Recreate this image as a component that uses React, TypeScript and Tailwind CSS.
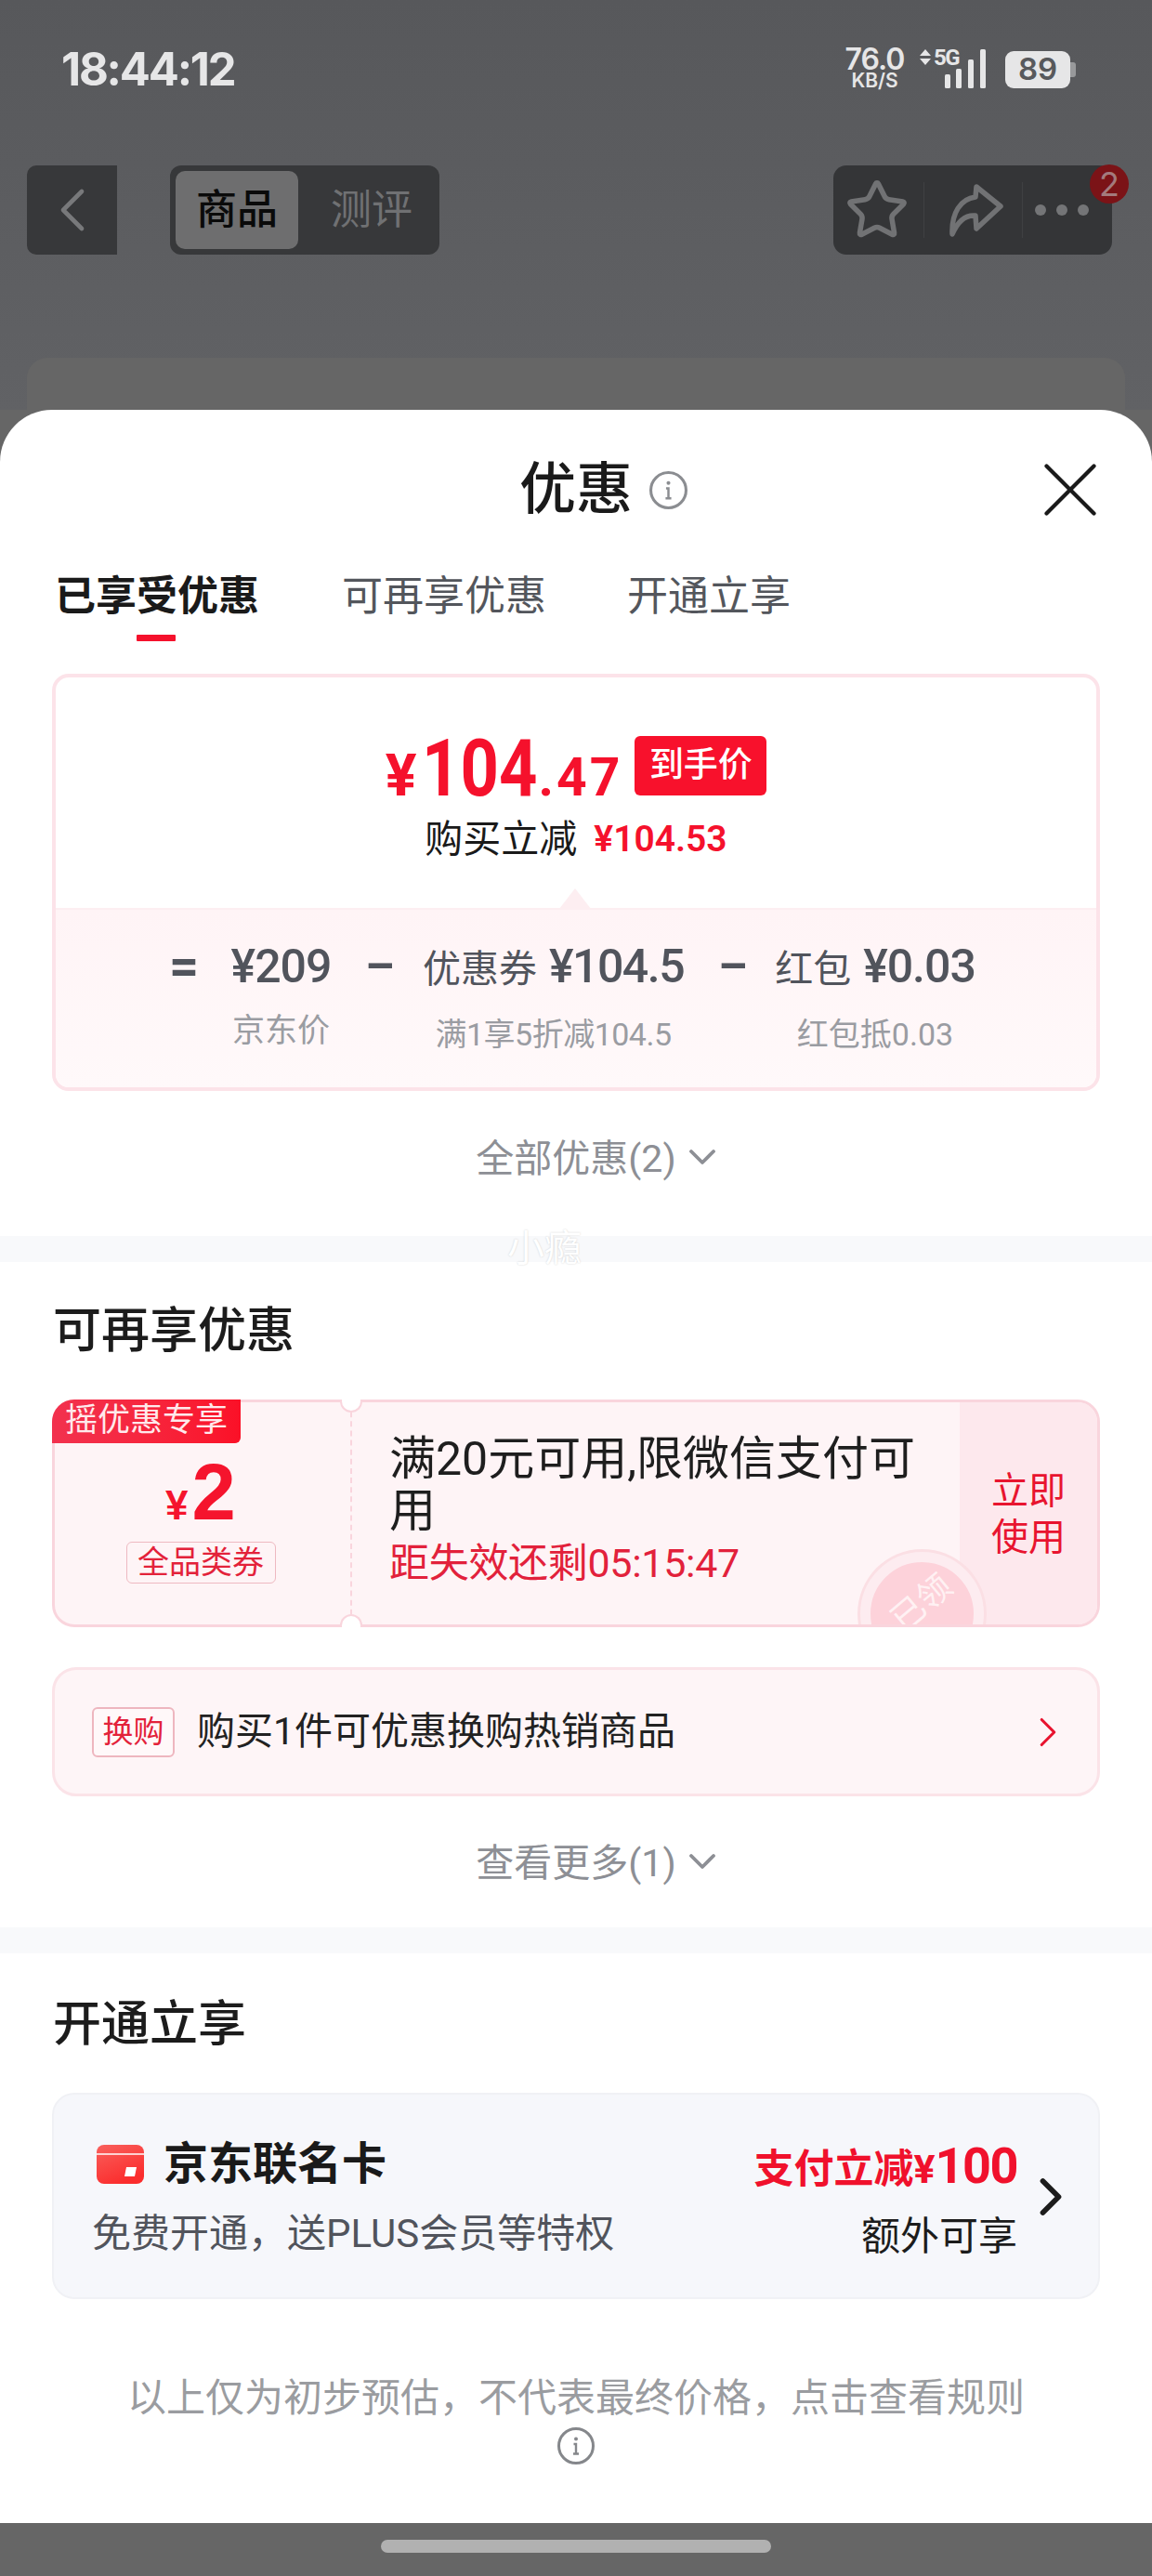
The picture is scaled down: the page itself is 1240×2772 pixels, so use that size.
import { ChevronDown, ChevronLeft, ChevronRight, Star, X } from "lucide-react";

const sans = "font-['Roboto','Noto_Sans_CJK_SC',sans-serif]";

function InfoIcon({ size, color }: { size: number; color: string }) {
  return (
    <svg width={size} height={size} viewBox="0 0 40 40" fill="none">
      <circle cx="20" cy="20" r="18.500" stroke={color} strokeWidth="3" />
      <circle cx="20" cy="12.5" r="2" fill={color} />
      <path d="M17.500 18h2.500v10.500M17 28.500h6" stroke={color} strokeWidth="2.400" />
    </svg>
  );
}

function StatusBar() {
  return (
    <div className="flex h-[150px] shrink-0 items-start justify-between pl-[66px] pr-[82px] pt-[51px]">
      <span className="font-['Inter',sans-serif] text-[49px] leading-[48px] font-bold tracking-[-2.200px] text-[#e6e6e7]">
        18:44:12
      </span>
      <div className="flex items-start">
        <div className="flex w-[67px] flex-col items-center text-[#e6e6e7]">
          <span className="font-['Inter',sans-serif] text-[32px] leading-[26px] font-semibold tracking-[-1px]">76.0</span>
          <span className="mt-[1px] font-['Inter',sans-serif] text-[21px] leading-[18px] font-semibold">KB/S</span>
        </div>
        <div className="relative mt-[2px] ml-[15px] h-[42px] w-[71px]">
          <svg width="71" height="42" viewBox="0 0 71 42" fill="#e6e6e7">
            <path d="M0 7 6 0 12 7zM0 10h12l-6 7z" />
            <rect x="27" y="27" width="6" height="15" rx="1.500" />
            <rect x="39" y="21" width="6" height="21" rx="1.500" />
            <rect x="52" y="11" width="6" height="31" rx="1.500" />
            <rect x="65" y="0" width="6" height="42" rx="1.500" />
          </svg>
          <span className="absolute top-[-3px] left-[15px] font-['Roboto',sans-serif] text-[24px] leading-[24px] font-bold tracking-[-1.500px] text-[#e6e6e7]">
            5G
          </span>
        </div>
        <div className="mt-[4px] ml-[21px] flex items-center">
          <div className="flex h-[40px] w-[70px] items-center justify-center rounded-[9px] bg-[#e6e6e7] font-['Inter',sans-serif] text-[33px] font-semibold text-[#58595c]">
            89
          </div>
          <div className="h-[16px] w-[6px] rounded-r-[3px] bg-[#98999b]" />
        </div>
      </div>
    </div>
  );
}

function TopNav() {
  return (
    <div className="mt-[28px] flex h-[96px] shrink-0 items-stretch justify-between pl-[29px] pr-[43px]">
      <div className="flex">
        <div className="flex w-[97px] items-center justify-center rounded-l-[10px] bg-[#37383a]">
          <ChevronLeft size={80} strokeWidth={1.4} color="#78797b" />
        </div>
        <div className="ml-[57px] flex w-[290px] rounded-[12px] bg-[#37383a] p-[6px]">
          <div className="flex h-[84px] w-[132px] items-center justify-center rounded-[10px] bg-[#6e6e6f] text-[44px] font-medium text-[#0a0a0a]">
            商品
          </div>
          <div className="flex flex-1 items-center justify-center pl-[12px] text-[44px] text-[#707173]">测评</div>
        </div>
      </div>
      <div className="relative flex w-[300px] items-center rounded-[14px] bg-[#343537] pl-[12px]">
        <Star size={70} strokeWidth={1.9} color="#717274" />
        <div className="ml-[15px] h-[60px] w-[1px] bg-[#3f4042]" />
        <svg className="ml-[25px]" width="60" height="58" viewBox="0 0 60 58" fill="none" stroke="#717274" strokeWidth="5.500" strokeLinejoin="round" strokeLinecap="round">
          <path d="M31 4 57 25 31 49 30 35C20 34 11 41 5 55 4 32 14 17 30 15Z" />
        </svg>
        <div className="ml-[20px] h-[60px] w-[1px] bg-[#3f4042]" />
        <div className="ml-[13px] flex gap-[11px]">
          <span className="size-[12px] rounded-full bg-[#747577]" />
          <span className="size-[12px] rounded-full bg-[#747577]" />
          <span className="size-[12px] rounded-full bg-[#747577]" />
        </div>
        <span className="absolute top-[-1px] right-[-18px] flex size-[42px] items-center justify-center rounded-full bg-[#7b1317] font-['Inter',sans-serif] text-[36px] text-[#a37b7d]">
          2
        </span>
      </div>
    </div>
  );
}

function PriceCard() {
  return (
    <div className="mx-[56px] mt-[40px] h-[449px] rounded-[18px] border-[4px] border-[#fce3e9] bg-white">
      <div className="relative h-[248px]">
        <div className="flex justify-center pt-[62px]">
          <div className="flex items-baseline font-['Roboto',sans-serif] leading-[72px] font-bold text-[#f5112c]">
            <span className="text-[63px]">¥</span>
            <span className="mr-[-23px] ml-[6px] origin-left scale-x-[0.84] text-[86px]">104</span>
            <span className="text-[57px] tracking-[3px]">.47</span>
          </div>
          <span className="mt-[1px] ml-[13px] flex h-[64px] w-[142px] items-center justify-center rounded-[6px] bg-[#f8112c] text-[37px] font-medium text-white">
            到手价
          </span>
        </div>
        <div className="flex items-center justify-center">
          <span className="text-[41px] leading-[60px] text-[#1a1a1a]">购买立减</span>
          <span className="ml-[18px] font-['Roboto',sans-serif] text-[39px] font-semibold text-[#f5112c]">¥104.53</span>
        </div>
        <div className="absolute bottom-[-1px] left-[542px] h-0 w-0 border-x-[17px] border-b-[22px] border-x-transparent border-b-[#fdeef1]" />
      </div>
      <div className="flex h-[193px] items-start rounded-b-[14px] border-t-[2px] border-[#fdeef1] bg-gradient-to-b from-[#fff4f6] to-[#fff9fa] pl-[122px] pt-[31px] text-[#51545c]">
        <span className="w-[67px] text-[56px] leading-[60px] font-bold">=</span>
        <div className="flex w-[107px] flex-col items-center">
          <span className="font-['Roboto',sans-serif] text-[50px] leading-[60px] font-medium tracking-[-1px]">¥209</span>
          <span className="mt-[18px] text-[35px] leading-[44px] whitespace-nowrap text-[#9a9ca2]">京东价</span>
        </div>
        <span className="ml-[37px] w-[64px] text-[50px] leading-[60px] font-bold">–</span>
        <div className="flex w-[277px] flex-col items-center">
          <div className="flex items-baseline whitespace-nowrap">
            <span className="text-[41px] leading-[60px]">优惠券</span>
            <span className="ml-[13px] font-['Roboto',sans-serif] text-[50px] leading-[60px] font-medium tracking-[-1.500px]">¥104.5</span>
          </div>
          <span className="mt-[18px] text-[34px] leading-[44px] tracking-[-0.500px] whitespace-nowrap text-[#9a9ca2]">满1享5折减104.5</span>
        </div>
        <span className="ml-[39px] w-[63px] text-[50px] leading-[60px] font-bold">–</span>
        <div className="flex w-[212px] flex-col items-center">
          <div className="flex items-baseline whitespace-nowrap">
            <span className="text-[41px] leading-[60px]">红包</span>
            <span className="ml-[13px] font-['Roboto',sans-serif] text-[50px] leading-[60px] font-medium tracking-[-1px]">¥0.03</span>
          </div>
          <span className="mt-[18px] text-[34px] leading-[44px] whitespace-nowrap text-[#9a9ca2]">红包抵0.03</span>
        </div>
      </div>
    </div>
  );
}

function Coupon() {
  return (
    <div className="relative mx-[56px] mt-[43px] h-[245px]">
      <div className="flex h-full overflow-hidden rounded-[24px] border-[3px] border-[#f9d5dd] bg-[#fef4f6]">
        <span className="absolute top-0 left-0 flex h-[47px] w-[203px] items-center justify-center rounded-tl-[24px] rounded-br-[6px] bg-gradient-to-r from-[#f2314e] to-[#fb1027] text-[35px] text-[#ffe9ec]">
          摇优惠专享
        </span>
        <div className="flex w-[320px] shrink-0 flex-col items-center border-r-[2px] border-dashed border-[#f9d5dd] pt-[59px] pr-[4px]">
          <div className="flex items-baseline font-['Liberation_Sans',sans-serif] leading-[76px] font-bold text-[#f5142d]">
            <span className="text-[44px]">¥</span>
            <span className="ml-[4px] text-[85px]">2</span>
          </div>
          <span className="mt-[1px] flex h-[45px] w-[161px] items-center justify-center rounded-[6px] border border-[#eeb9c1] text-[34px] text-[#e3223a]">
            全品类券
          </span>
        </div>
        <div className="relative flex-1 pl-[40px] pt-[33px]">
          <p className="w-[575px] text-[50px] leading-[56px] text-[#1e1e1e]">满20元可用,限微信支付可用</p>
          <p className="text-[43px] leading-[56px] tracking-[-0.300px] text-[#e2213b]">距失效还剩05:15:47</p>
          <div className="absolute top-[161px] left-[547px] z-10 flex size-[133px] items-center justify-center rounded-full border-[11px] border-[#fdecf0] bg-[#fdd2da] shadow-[0_0_0_3px_#fbdfe4]">
            <span className="mt-[-24px] rotate-[-40deg] text-[36px] text-[#fff1f3]">已领</span>
          </div>
        </div>
        <div className="flex w-[148px] shrink-0 items-center justify-center bg-[#fde8ed] pt-[2px] text-center text-[40px] leading-[50px] text-[#e8142f]">
          立即
          <br />
          使用
        </div>
      </div>
      <span className="absolute top-0 left-[310px] h-[14px] w-[24px] rounded-b-full border-x-[2px] border-b-[2px] border-[#f9d5dd] bg-white" />
      <span className="absolute bottom-0 left-[310px] h-[14px] w-[24px] rounded-t-full border-x-[2px] border-t-[2px] border-[#f9d5dd] bg-white" />
    </div>
  );
}

function Exchange() {
  return (
    <div className="mx-[56px] mt-[43px] flex h-[139px] items-center rounded-[26px] border-[3px] border-[#fbe3e8] bg-[#fef5f7] pl-[40px] pr-[26px]">
      <span className="flex h-[54px] w-[89px] items-center justify-center rounded-[6px] border-2 border-[#eeb6bf] bg-[#fff8f9] text-[33px] text-[#e3223a]">
        换购
      </span>
      <span className="ml-[24px] flex-1 text-[41px] text-[#222]">购买1件可优惠换购热销商品</span>
      <ChevronRight size={54} strokeWidth={1.4} color="#e8142f" />
    </div>
  );
}

function MoreLink({ label }: { label: string }) {
  return (
    <div className="flex h-[60px] items-center justify-center pl-[52px] text-[41px] text-[#8d8f95]">
      <span>{label}</span>
      <ChevronDown className="mt-[-6px] ml-[4px]" size={48} strokeWidth={1.9} />
    </div>
  );
}

export default function App() {
  return (
    <div className={`${sans} flex h-[2772px] w-[1240px] flex-col overflow-hidden bg-[#666666]`}>
      <div className="h-[441px] shrink-0 bg-gradient-to-b from-[#57585b] to-[#616265]">
        <StatusBar />
        <TopNav />
        <div className="mx-[29px] mt-[111px] h-[56px] rounded-t-[22px] bg-[#666666]" />
      </div>

      <div className="relative z-10 h-[2274px] shrink-0 overflow-hidden rounded-t-[56px] bg-white pt-[26px]">
        {/* title */}
        <div className="relative flex h-[121px] items-center justify-center pl-[59px]">
          <span className="text-[61px] font-medium text-[#1a1a1a]">优惠</span>
          <span className="ml-[18px]">
            <InfoIcon size={41} color="#8b8d91" />
          </span>
          <X className="absolute top-[9px] right-[37px]" size={102} strokeWidth={1} color="#1a1a1a" />
        </div>

        {/* tabs */}
        <div className="mt-[25px] flex h-[72px] pl-[59px] text-[44px] leading-[58px]">
          <div className="relative h-[58px] font-bold text-[#1a1a1a]">
            已享受优惠
            <span className="absolute bottom-[-19px] left-[88px] h-[7px] w-[42px] rounded-[1px] bg-[#f5112c]" />
          </div>
          <span className="ml-[89px] text-[#53565c]">可再享优惠</span>
          <span className="ml-[87px] text-[#53565c]">开通立享</span>
        </div>

        <PriceCard />
        <div className="mt-[44px]">
          <MoreLink label="全部优惠(2)" />
        </div>

        {/* divider */}
        <div className="relative mt-[52px] h-[28px] bg-[#f8f9fb]">
          <span className="absolute top-[-16px] left-[546px] text-[40px] text-white [text-shadow:0_0_2px_rgba(0,0,0,0.18)]">小瘾</span>
        </div>

        <h2 className="pl-[57px] pt-[45px] text-[52px] leading-[60px] font-medium text-[#1c1c1c]">可再享优惠</h2>
        <Coupon />
        <Exchange />
        <div className="mt-[43px]">
          <MoreLink label="查看更多(1)" />
        </div>

        <div className="mt-[38px] h-[28px] bg-[#f8f9fb]" />

        <h2 className="pl-[57px] pt-[47px] text-[52px] leading-[60px] font-medium text-[#1c1c1c]">开通立享</h2>

        {/* co-brand card */}
        <div className="mx-[56px] mt-[43px] flex h-[222px] items-start rounded-[24px] border-2 border-[#f0f1f5] bg-[#f6f7fb] pl-[41px] pr-[17px] pt-[45px]">
          <div className="flex-1">
            <div className="flex items-center pl-[5px]">
              <svg width="51" height="42" viewBox="0 0 51 42">
                <defs>
                  <linearGradient id="jdCard" x1="0" y1="0" x2="0.5" y2="1">
                    <stop offset="0" stopColor="#f9605c" />
                    <stop offset="1" stopColor="#fb2d2d" />
                  </linearGradient>
                </defs>
                <rect width="51" height="42" rx="8" fill="url(#jdCard)" />
                <path d="M0 10h51" stroke="#fff" strokeOpacity=".75" strokeWidth="2" />
                <path d="M32 24h11l-2 10H30z" fill="#fff" />
              </svg>
              <span className="ml-[21px] text-[48px] leading-[60px] font-bold text-[#1a1a1a]">京东联名卡</span>
            </div>
            <p className="mt-[17px] text-[42px] leading-[56px] text-[#51545c]">免费开通，送PLUS会员等特权</p>
          </div>
          <div className="flex flex-col items-end pt-[2px]">
            <div className="flex items-baseline leading-[60px] font-bold text-[#f0112c]">
              <span className="text-[43px]">支付立减¥</span>
              <span className="font-['Roboto',sans-serif] text-[54px] tracking-[-1.500px]">100</span>
            </div>
            <p className="mt-[15px] text-[42px] leading-[56px] text-[#1c1c1c]">额外可享</p>
          </div>
          <ChevronRight className="mt-[31px] ml-[2px]" size={68} strokeWidth={2} color="#1c1c1c" />
        </div>

        <p className="mt-[79px] text-center text-[42px] leading-[56px] text-[#9a9ca0]">
          以上仅为初步预估，不代表最终价格，点击查看规则
        </p>
        <div className="mt-[3px] flex justify-center">
          <InfoIcon size={40} color="#85878b" />
        </div>
      </div>

      {/* home indicator */}
      <div className="flex flex-1 items-start justify-center bg-[#666666] pt-[18px]">
        <div className="h-[14px] w-[420px] rounded-full bg-[#b1b1b1]" />
      </div>
    </div>
  );
}
